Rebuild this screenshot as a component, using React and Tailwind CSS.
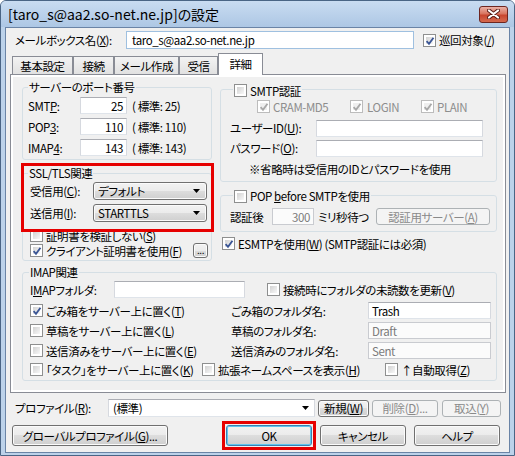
import React from "react";

function U({ children }) {
  return <span className="underline underline-offset-[1px]">{children}</span>;
}

function Check({ checked, disabled, className = "" }) {
  return (
    <span
      className={`relative inline-flex shrink-0 w-[13px] h-[13px] border bg-white p-[2px] ${
        disabled ? "border-[#bcbcbc]" : "border-[#8e8f8f]"
      } ${className}`}
    >
      <span
        className={`block w-full h-full ${
          disabled ? "bg-[#efefef]" : "bg-gradient-to-br from-[#d2d2d2] to-[#f8f8f8]"
        }`}
      />
      {checked && (
        <svg className="absolute left-[1px] top-[1px]" width="10" height="10" viewBox="0 0 10 10">
          <path
            d="M1.6 5.2 L4 7.9 L8.5 1.7"
            fill="none"
            stroke={disabled ? "#a8a8a8" : "#3a5595"}
            strokeWidth="1.8"
          />
        </svg>
      )}
    </span>
  );
}

function Btn({ children, className = "", disabled, def }) {
  const look = disabled
    ? "border-[#adb2b5] bg-[#f4f4f4] text-[#8a8a8a]"
    : def
    ? "border-[#3c7fb1] bg-[linear-gradient(#f2f2f2_0%,#ebebeb_50%,#dddddd_50%,#cfcfcf_100%)] shadow-[inset_0_0_0_1px_#5fc6ee]"
    : "border-[#707070] bg-[linear-gradient(#f2f2f2_0%,#ebebeb_50%,#dddddd_50%,#cfcfcf_100%)] shadow-[inset_0_0_0_1px_#fbfbfb]";
  return (
    <div className={`flex items-center justify-center shrink-0 border rounded-[3px] ${look} ${className}`}>
      {children}
    </div>
  );
}

function Select({ value, className = "" }) {
  return (
    <div
      className={`flex items-center justify-between shrink-0 border border-[#707070] rounded-[3px] bg-[linear-gradient(#f2f2f2_0%,#ebebeb_50%,#dddddd_50%,#cfcfcf_100%)] shadow-[inset_0_0_0_1px_#fbfbfb] pl-[4px] pr-[6px] ${className}`}
    >
      <span>{value}</span>
      <svg width="7" height="4" viewBox="0 0 7 4">
        <path d="M0 0H7L3.5 4Z" fill="#000" />
      </svg>
    </div>
  );
}

function Field({ className = "", children, disabled }) {
  return (
    <div
      className={`flex items-center shrink-0 border ${
        disabled ? "border-[#c9cbd0] bg-[#fbfbfb] text-[#7a7a7a]" : "border-[#abadb3] border-l-[#d6d9df] border-r-[#d6d9df] border-b-[#dfe4ea] bg-white"
      } ${className}`}
    >
      {children}
    </div>
  );
}

function Tab({ className = "", children }) {
  return (
    <div
      className={`h-[18px] flex items-center justify-center border border-b-0 border-[#898c95] bg-[linear-gradient(#f3f3f3,#e1e1e1)] ${className}`}
    >
      {children}
    </div>
  );
}

function CloseBtn() {
  return (
    <div className="w-[29px] h-[17px] rounded-[3px] border border-[#6e2620] bg-[linear-gradient(#eab1a6_0%,#d9755f_45%,#c8462f_55%,#d56a4f_100%)] flex items-center justify-center">
      <svg width="13" height="10" viewBox="0 0 13 10">
        <path d="M2 1.5 L11 8.5 M11 1.5 L2 8.5" stroke="#5a1d17" strokeWidth="4" strokeLinecap="round" />
        <path d="M2 1.5 L11 8.5 M11 1.5 L2 8.5" stroke="#ffffff" strokeWidth="2.2" strokeLinecap="round" />
      </svg>
    </div>
  );
}

function PortRow({ label, value, std }) {
  return (
    <div className="flex items-center h-[17px]">
      <span className="w-[52px]">{label}</span>
      <Field className="w-[47px] h-[17px] justify-end pr-[3px]">{value}</Field>
      <span className="ml-[5px]">( 標準: {std})</span>
    </div>
  );
}

function FolderRow({ check, left, right, value, disabled }) {
  return (
    <div className="flex items-center h-[17px]">
      <div className="w-[201px] flex items-center">
        <Check checked={check} />
        <span className="ml-[3px]">{left}</span>
      </div>
      <span className="w-[137px]">{right}</span>
      <Field disabled={disabled} className="w-[123px] h-[17px] pl-[3px]">
        {value}
      </Field>
    </div>
  );
}

export default function App() {
  return (
    <div className="w-[515px] h-[456px] flex flex-col bg-[#bcd2ea] border border-[#4a6585] rounded-t-[6px] overflow-hidden text-[11.5px] leading-[14px] tracking-[-0.4px] whitespace-nowrap text-black font-['Noto_Sans_CJK_JP','Noto_Sans',sans-serif] [font-feature-settings:'palt']">
      {/* Title bar */}
      <div className="h-[26px] shrink-0 flex items-center justify-between pl-[7px] pr-[6px] bg-gradient-to-b from-[#c9dcf1] to-[#adc7e4]">
        <span className="text-[14px] leading-[18px] tracking-[0px]">[taro_s@aa2.so-net.ne.jp]の設定</span>
        <CloseBtn />
      </div>

      {/* Client area */}
      <div className="flex-1 mx-[4px] mb-[2px] border border-[#6a84a6] bg-[#f0f0f0] flex flex-col">
        {/* Mailbox name row */}
        <div className="flex items-center mt-[3px] pl-[9px] h-[18px]">
          <span className="w-[111px]">
            メールボックス名(<U>X</U>):
          </span>
          <div className="w-[288px] h-[18px] border border-[#9fc0e0] bg-white flex items-center px-[5px]">
            taro_s@aa2.so-net.ne.jp
          </div>
          <Check checked className="ml-[9px]" />
          <span className="ml-[3px]">
            巡回対象(<U>/</U>)
          </span>
        </div>

        {/* Tabs */}
        <div className="flex items-end h-[21px] mt-[4px] pl-[6px]">
          <Tab className="w-[61px]">基本設定</Tab>
          <Tab className="w-[41px]">接続</Tab>
          <Tab className="w-[65px]">メール作成</Tab>
          <Tab className="w-[39px]">受信</Tab>
          <div className="relative z-10 w-[45px] h-[22px] -mb-[1px] flex items-start justify-center pt-[3px] border border-b-0 border-[#898c95] bg-white">
            詳細
          </div>
        </div>

        {/* Tab panel */}
        <div className="ml-[4px] w-[496px] h-[319px] border border-[#898c95] bg-white p-[2px] shrink-0">
          <div className="relative h-full bg-[#f0f0f0] pt-[3px] pl-[9px]">
            <div className="flex">
              {/* Left column */}
              <div className="w-[190px] shrink-0">
                <fieldset className="border border-[#d5dfe5] rounded-[3px] pb-[3px]">
                  <legend className="ml-[5px] px-[1px] leading-[14px]">サーバーのポート番号</legend>
                  <div className="flex flex-col gap-[4px] mt-[3px] pl-[5px]">
                    <PortRow label={<>SMT<U>P</U>:</>} value="25" std="25" />
                    <PortRow label={<>POP<U>3</U>:</>} value="110" std="110" />
                    <PortRow label={<>IMAP<U>4</U>:</>} value="143" std="143" />
                  </div>
                </fieldset>

                <fieldset className="mt-[6px] border border-[#d5dfe5] rounded-[3px] pb-[2px]">
                  <legend className="ml-[5px] px-[1px] leading-[14px]">SSL/TLS関連</legend>
                  <div className="flex flex-col gap-[4px] mt-[2px] pl-[7px]">
                    <div className="flex items-center">
                      <span className="w-[63px]">
                        受信用(<U>C</U>):
                      </span>
                      <Select className="w-[114px] h-[18px]" value="デフォルト" />
                    </div>
                    <div className="flex items-center">
                      <span className="w-[63px]">
                        送信用(<U>I</U>):
                      </span>
                      <Select className="w-[114px] h-[18px]" value="STARTTLS" />
                    </div>
                  </div>
                  <div className="mt-[6px] pl-[7px] pr-[3px]">
                    <div className="flex items-center h-[15px]">
                      <Check />
                      <span className="ml-[3px]">
                        証明書を検証しない(<U>S</U>)
                      </span>
                    </div>
                    <div className="flex items-center h-[15px]">
                      <Check checked />
                      <span className="ml-[3px]">
                        クライアント証明書を使用(<U>F</U>)
                      </span>
                      <Btn className="ml-auto w-[15px] h-[15px] text-[10px] leading-[10px] items-end pb-[2px]">...</Btn>
                    </div>
                  </div>
                </fieldset>
              </div>

              {/* Right column */}
              <div className="w-[277px] ml-[8px] shrink-0">
                <fieldset className="mt-[2px] border border-[#d5dfe5] rounded-[3px] pb-[5px]">
                  <legend className="ml-[12px] px-[1px] leading-[14px]">
                    <span className="inline-flex items-center h-[14px]">
                      <Check />
                      <span className="ml-[3px]">SMTP認証</span>
                    </span>
                  </legend>
                  <div className="flex items-center h-[14px] mt-[2px] pl-[36px] text-[#8d8d8d]">
                    <div className="w-[93px] flex items-center">
                      <Check checked disabled />
                      <span className="ml-[3px]">CRAM-MD5</span>
                    </div>
                    <div className="w-[71px] flex items-center">
                      <Check checked disabled />
                      <span className="ml-[4px]">LOGIN</span>
                    </div>
                    <div className="flex items-center">
                      <Check checked disabled />
                      <span className="ml-[3px]">PLAIN</span>
                    </div>
                  </div>
                  <div className="flex items-center mt-[6px] pl-[9px]">
                    <span className="w-[86px]">
                      ユーザーID(<U>U</U>):
                    </span>
                    <Field className="w-[167px] h-[17px]" />
                  </div>
                  <div className="flex items-center mt-[3px] pl-[9px]">
                    <span className="w-[86px]">
                      パスワード(<U>O</U>):
                    </span>
                    <Field className="w-[167px] h-[17px]" />
                  </div>
                  <div className="mt-[5px] h-[14px] pl-[28px]">※省略時は受信用のIDとパスワードを使用</div>
                </fieldset>

                <fieldset className="mt-[6px] border border-[#d5dfe5] rounded-[3px] pb-[6px]">
                  <legend className="ml-[12px] px-[1px] leading-[14px]">
                    <span className="inline-flex items-center h-[14px]">
                      <Check />
                      <span className="ml-[3px]">
                        POP <U>b</U>efore SMTPを使用
                      </span>
                    </span>
                  </legend>
                  <div className="flex items-center mt-[5px] pl-[9px] pr-[6px] h-[17px]">
                    <span className="w-[42px]">認証後</span>
                    <Field disabled className="w-[42px] h-[17px] justify-end pr-[3px]">
                      300
                    </Field>
                    <span className="ml-[4px]">ミリ秒待つ</span>
                    <Btn disabled className="ml-auto w-[114px] h-[17px]">
                      認証用サーバー(<U>A</U>)
                    </Btn>
                  </div>
                </fieldset>

                <div className="flex items-center mt-[4px] pl-[2px] h-[15px]">
                  <Check checked />
                  <span className="ml-[3px]">
                    ESMTPを使用(<U>W</U>) (SMTP認証には必須)
                  </span>
                </div>
              </div>
            </div>

            {/* IMAP group */}
            <fieldset className="mt-[4px] w-[475px] border border-[#d5dfe5] rounded-[3px] pb-[3px]">
              <legend className="ml-[6px] px-[1px] leading-[14px]">IMAP関連</legend>
              <div className="flex items-center mt-[2px] pl-[7px] h-[17px]">
                <span className="w-[84px]">
                  I<U>M</U>APフォルダ:
                </span>
                <Field className="w-[131px] h-[17px]" />
                <Check className="ml-[22px]" />
                <span className="ml-[3px]">
                  接続時にフォルダの未読数を更新(<U>V</U>)
                </span>
              </div>
              <div className="flex flex-col gap-[3px] mt-[4px] pl-[7px]">
                <FolderRow
                  check
                  left={<>ごみ箱をサーバー上に置く(<U>T</U>)</>}
                  right="ごみ箱のフォルダ名:"
                  value="Trash"
                />
                <FolderRow
                  left={<>草稿をサーバー上に置く(<U>L</U>)</>}
                  right="草稿のフォルダ名:"
                  value="Draft"
                  disabled
                />
                <FolderRow
                  left={<>送信済みをサーバー上に置く(<U>E</U>)</>}
                  right="送信済みのフォルダ名:"
                  value="Sent"
                  disabled
                />
              </div>
              <div className="flex items-center mt-[3px] pl-[7px] h-[15px]">
                <div className="w-[172px] flex items-center">
                  <Check />
                  <span className="ml-[3px]">
                    「タスク」をサーバー上に置く(<U>K</U>)
                  </span>
                </div>
                <div className="w-[183px] flex items-center">
                  <Check />
                  <span className="ml-[3px]">
                    拡張ネームスペースを表示(<U>H</U>)
                  </span>
                </div>
                <div className="flex items-center">
                  <Check />
                  <span className="ml-[3px]">
                    ↑自動取得(<U>Z</U>)
                  </span>
                </div>
              </div>
            </fieldset>

            {/* red annotation around SSL/TLS */}
            <div className="absolute left-[8px] top-[86px] w-[193px] h-[69px] border-[3px] border-[#e60000] z-20 pointer-events-none" />
          </div>
        </div>

        {/* Profile row */}
        <div className="flex items-center mt-[6px] pl-[9px] h-[18px]">
          <span className="w-[93px]">
            プロファイル(<U>R</U>):
          </span>
          <Field className="w-[207px] h-[18px] justify-between pl-[4px] pr-[5px]">
            <span>(標準)</span>
            <svg width="7" height="4" viewBox="0 0 7 4">
              <path d="M0 0H7L3.5 4Z" fill="#000" />
            </svg>
          </Field>
          <Btn className="ml-[3px] w-[51px] h-[17px]">
            新規(<U>W</U>)
          </Btn>
          <Btn disabled className="ml-[3px] w-[66px] h-[17px]">
            削除(<U>D</U>)...
          </Btn>
          <Btn disabled className="ml-[4px] w-[59px] h-[17px]">
            取込(<U>Y</U>)
          </Btn>
        </div>

        {/* Bottom buttons */}
        <div className="flex items-center mt-[8px] pl-[6px] h-[21px]">
          <Btn className="w-[156px] h-[21px]">
            グローバルプロファイル(<U>G</U>)...
          </Btn>
          <div className="relative ml-[58px]">
            <Btn def className="w-[86px] h-[21px]">
              OK
            </Btn>
            <div className="absolute -inset-[4px] border-[3px] border-[#e60000] pointer-events-none" />
          </div>
          <Btn className="ml-[8px] w-[86px] h-[21px]">キャンセル</Btn>
          <Btn className="ml-[8px] w-[86px] h-[21px]">ヘルプ</Btn>
        </div>
      </div>
    </div>
  );
}
